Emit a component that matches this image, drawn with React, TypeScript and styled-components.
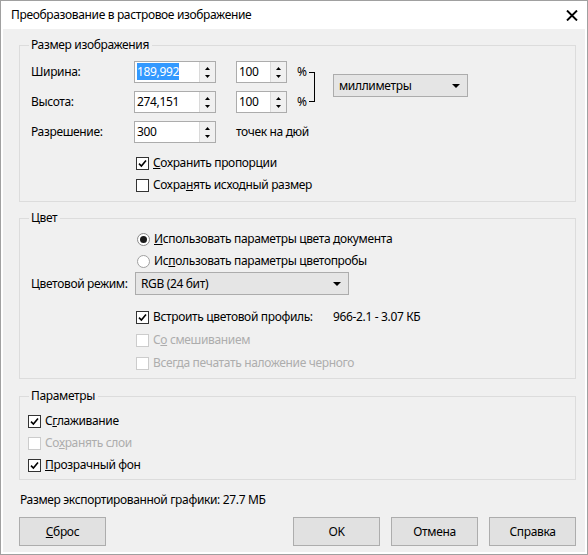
import styled, { createGlobalStyle } from "styled-components";

const GlobalStyle = createGlobalStyle`
  html, body {
    margin: 0;
    padding: 0;
    background: #fff;
  }
  body {
    font-family: "Noto Sans", "Open Sans", sans-serif;
    font-size: 12px;
    letter-spacing: -0.35px;
    color: #000;
  }
`;

const Window = styled.div`
  width: 588px;
  height: 555px;
  box-sizing: border-box;
  border: 1px solid #a0a0a0;
  background: #fff;
  display: flex;
  flex-direction: column;
`;

const TitleBar = styled.div`
  height: 28px;
  flex: none;
  display: flex;
  align-items: center;
  justify-content: space-between;
  padding: 0 9px 0 10px;
`;

const Title = styled.span`
  line-height: 16px;
`;

const Client = styled.div`
  flex: 1;
  margin: 0 2px 2px;
  background: #f0f0f0;
  padding: 8px 9px 0 16px;
  display: flex;
  flex-direction: column;
`;

const Group = styled.fieldset<{ $top?: number }>`
  margin: ${(p) => p.$top ?? 0}px 0 0;
  padding: 0;
  border: 1px solid #dcdcdc;
  min-width: 0;
`;

const Legend = styled.legend`
  margin-left: 9px;
  padding: 0 3px 0 2px;
  line-height: 16px;
`;

const GroupBody = styled.div<{ $pad: string }>`
  padding: ${(p) => p.$pad};
  display: flex;
  flex-direction: column;
`;

const SizeGrid = styled.div`
  display: grid;
  grid-template-columns: 103px 102px 72px 25px auto;
  grid-template-rows: 22px 22px 22px;
  row-gap: 8px;
  align-items: center;
`;

const Label = styled.span`
  line-height: 16px;
  white-space: nowrap;
`;

const PctCell = styled.div`
  display: flex;
  align-items: center;
  gap: 10px;
`;

const Bracket = styled.span`
  grid-column: 4;
  grid-row: 1 / 3;
  align-self: center;
  width: 6px;
  height: 30px;
  margin-left: 1px;
  box-sizing: border-box;
  border: 1px solid #000;
  border-left: none;
`;

const UnitsCell = styled.div`
  grid-column: 5;
  grid-row: 1 / 3;
  align-self: start;
  margin-top: 13px;
`;

const Spin = styled.div<{ $w: number }>`
  width: ${(p) => p.$w}px;
  height: 22px;
  box-sizing: border-box;
  border: 1px solid #acacac;
  background: #fff;
  display: flex;
`;

const SpinText = styled.div`
  flex: 1;
  padding-left: 2px;
  line-height: 20px;
  white-space: nowrap;
`;

const Selected = styled.span`
  background: #3399ff;
  color: #fff;
`;

const SpinButtons = styled.div`
  width: 15px;
  border-left: 1px solid #dadada;
  background: #f0f0f0;
  display: flex;
  flex-direction: column;
  align-items: center;
  justify-content: space-around;
  padding: 2px 0;
`;

const Combo = styled.div<{ $w: number }>`
  width: ${(p) => p.$w}px;
  height: 23px;
  box-sizing: border-box;
  border: 1px solid #acacac;
  background: #e5e5e5;
  display: flex;
  align-items: center;
  justify-content: space-between;
  padding: 0 7px 0 5px;
`;

const CheckRow = styled.div<{ $indent?: number; $disabled?: boolean; $w?: number }>`
  display: flex;
  align-items: center;
  gap: 4px;
  height: 22px;
  margin-left: ${(p) => p.$indent ?? 0}px;
  width: ${(p) => (p.$w ? `${p.$w}px` : "auto")};
  color: ${(p) => (p.$disabled ? "#adadad" : "#000")};
  white-space: nowrap;
  line-height: 16px;
`;

const Box = styled.span<{ $disabled?: boolean }>`
  width: 13px;
  height: 13px;
  flex: none;
  box-sizing: border-box;
  border: 1px solid ${(p) => (p.$disabled ? "#cccccc" : "#333333")};
  background: #fff;
  display: flex;
  align-items: center;
  justify-content: center;
`;

const Radio = styled.span<{ $on?: boolean }>`
  width: 13px;
  height: 13px;
  flex: none;
  box-sizing: border-box;
  border-radius: 50%;
  border: 1px solid ${(p) => (p.$on ? "#8a8a8a" : "#a0a0a0")};
  background: #fff;
  display: flex;
  align-items: center;
  justify-content: center;

  &::after {
    content: "";
    width: 7px;
    height: 7px;
    border-radius: 50%;
    background: ${(p) => (p.$on ? "#1a1a1a" : "transparent")};
  }
`;

const FormRow = styled.div<{ $mt?: number }>`
  display: flex;
  align-items: center;
  margin-top: ${(p) => p.$mt ?? 0}px;
`;

const FieldLabel = styled.span<{ $w: number }>`
  width: ${(p) => p.$w}px;
  flex: none;
  line-height: 16px;
  white-space: nowrap;
`;

const Stack = styled.div<{ $gap?: number; $mt?: number }>`
  display: flex;
  flex-direction: column;
  gap: ${(p) => p.$gap ?? 0}px;
  margin-top: ${(p) => p.$mt ?? 0}px;
`;

const ExportSize = styled.div`
  margin-top: 12px;
  padding-left: 1px;
  line-height: 16px;
`;

const Footer = styled.div`
  margin-top: 9px;
  display: flex;
  align-items: center;
  gap: 11px;
`;

const Button = styled.button<{ $push?: boolean }>`
  width: 87px;
  height: 29px;
  box-sizing: border-box;
  border: 1px solid #adadad;
  background: #e1e1e1;
  font: inherit;
  letter-spacing: inherit;
  color: #000;
  padding: 0;
  margin-left: ${(p) => (p.$push ? "auto" : "0")};
`;

const Arrow = ({ up }: { up: boolean }) => (
  <svg width="5" height="3" viewBox="0 0 5 3">
    <path d={up ? "M0 3 L2.5 0 L5 3 Z" : "M0 0 L5 0 L2.5 3 Z"} fill="#000" />
  </svg>
);

const ComboArrow = () => (
  <svg width="8" height="4" viewBox="0 0 8 4">
    <path d="M0 0 L8 0 L4 4 Z" fill="#000" />
  </svg>
);

const CloseIcon = () => (
  <svg width="12" height="11" viewBox="0 0 12 11">
    <path d="M1 0.5 L11 10.5 M11 0.5 L1 10.5" stroke="#000" strokeWidth="1.9" />
  </svg>
);

const Tick = () => (
  <svg width="9" height="9" viewBox="0 0 9 9">
    <path d="M1 4.6 L3.4 7 L8 1.6" stroke="#000" strokeWidth="1.6" fill="none" />
  </svg>
);

const SpinBox = ({ w, children }: { w: number; children: React.ReactNode }) => (
  <Spin $w={w}>
    <SpinText>{children}</SpinText>
    <SpinButtons>
      <Arrow up />
      <Arrow up={false} />
    </SpinButtons>
  </Spin>
);

const Check = ({
  checked,
  disabled,
  indent,
  w,
  children,
}: {
  checked?: boolean;
  disabled?: boolean;
  indent?: number;
  w?: number;
  children: React.ReactNode;
}) => (
  <CheckRow $indent={indent} $disabled={disabled} $w={w}>
    <Box $disabled={disabled}>{checked && <Tick />}</Box>
    <span>{children}</span>
  </CheckRow>
);

export default function App() {
  return (
    <>
      <GlobalStyle />
      <Window>
        <TitleBar>
          <Title>Преобразование в растровое изображение</Title>
          <CloseIcon />
        </TitleBar>
        <Client>
          <Group>
            <Legend>Размер изображения</Legend>
            <GroupBody $pad="8px 9px 5px 11px">
              <SizeGrid>
                <Label>Ширина:</Label>
                <SpinBox w={82}>
                  <Selected>189,992</Selected>
                </SpinBox>
                <PctCell>
                  <SpinBox w={51}>100</SpinBox>
                  <Label>%</Label>
                </PctCell>
                <Bracket />
                <UnitsCell>
                  <Combo $w={135}>
                    <span>миллиметры</span>
                    <ComboArrow />
                  </Combo>
                </UnitsCell>

                <Label>Высота:</Label>
                <SpinBox w={82}>274,151</SpinBox>
                <PctCell>
                  <SpinBox w={51}>100</SpinBox>
                  <Label>%</Label>
                </PctCell>

                <Label>Разрешение:</Label>
                <SpinBox w={82}>300</SpinBox>
                <Label>точек на дюй</Label>
              </SizeGrid>
              <Stack $mt={9}>
                <Check checked indent={105}>
                  <u>С</u>охранить пропорции
                </Check>
                <Check indent={105}>
                  Сохра<u>н</u>ять исходный размер
                </Check>
              </Stack>
            </GroupBody>
          </Group>

          <Group $top={8}>
            <Legend>Цвет</Legend>
            <GroupBody $pad="2px 9px 4px 11px">
              <CheckRow $indent={106}>
                <Radio $on />
                <span>
                  <u>И</u>спользовать параметры цвета документа
                </span>
              </CheckRow>
              <CheckRow $indent={106}>
                <Radio />
                <span>
                  Ис<u>п</u>ользовать параметры цветопробы
                </span>
              </CheckRow>
              <FormRow>
                <FieldLabel $w={104}>Цветовой режим:</FieldLabel>
                <Combo $w={214}>
                  <span>RGB (24 бит)</span>
                  <ComboArrow />
                </Combo>
              </FormRow>
              <Stack $gap={1} $mt={11}>
                <FormRow>
                  <Check checked indent={105} w={197}>
                    Встроить цветовой профиль:
                  </Check>
                  <Label>966-2.1 - 3.07 КБ</Label>
                </FormRow>
                <Check disabled indent={105}>
                  С<u>о</u> смешиванием
                </Check>
                <Check disabled indent={105}>
                  Всегда печатать наложение черного
                </Check>
              </Stack>
            </GroupBody>
          </Group>

          <Group $top={9}>
            <Legend>Параметры</Legend>
            <GroupBody $pad="6px 9px 3px 8px">
              <Check checked>
                С<u>г</u>лаживание
              </Check>
              <Check disabled>
                Со<u>х</u>ранять слои
              </Check>
              <Check checked>
                <u>П</u>розрачный фон
              </Check>
            </GroupBody>
          </Group>

          <ExportSize>Размер экспортированной графики: 27.7 МБ</ExportSize>

          <Footer>
            <Button>
              <u>С</u>брос
            </Button>
            <Button $push>OK</Button>
            <Button>Отмена</Button>
            <Button>Справка</Button>
          </Footer>
        </Client>
      </Window>
    </>
  );
}
